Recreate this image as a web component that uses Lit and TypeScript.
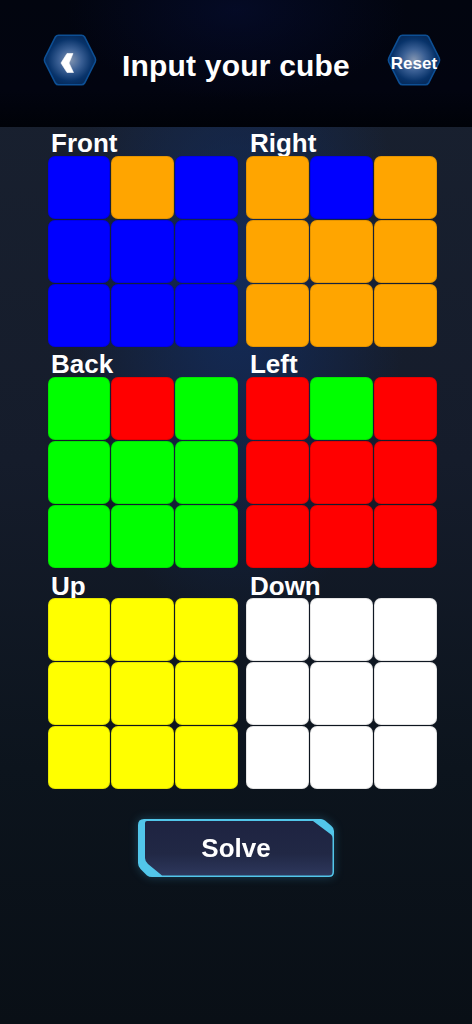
import { LitElement, html, css } from "lit";
import { customElement } from "lit/decorators.js";

const C: Record<string, string> = { b: "#0000ff", o: "#ffa500", g: "#00ff00", r: "#ff0000", y: "#ffff00", w: "#ffffff" };
const FACES: [string, string][] = [
  ["Front", "bobbbbbbb"],
  ["Right", "obooooooo"],
  ["Back", "grggggggg"],
  ["Left", "rgrrrrrrr"],
  ["Up", "yyyyyyyyy"],
  ["Down", "wwwwwwwww"],
];

const hex = (id: string) => html`
  <svg class="hexbg" viewBox="0 0 54 52" width="54" height="52" aria-hidden="true">
    <defs>
      <radialGradient id=${id} cx="50%" cy="50%" r="50%">
        <stop offset="0" stop-color="#8496b2" />
        <stop offset="0.45" stop-color="#3a5f94" />
        <stop offset="0.85" stop-color="#08336a" />
        <stop offset="1" stop-color="#062c5e" />
      </radialGradient>
    </defs>
    <path
      d="M15.5 1.2 H38.5 Q40.5 1.2 41.6 3 L52.2 24 Q53 26 52.2 28 L41.6 49 Q40.5 50.8 38.5 50.8 H15.5 Q13.5 50.8 12.4 49 L1.8 28 Q1 26 1.8 24 L12.4 3 Q13.5 1.2 15.5 1.2 Z"
      fill="url(#${id})"
      stroke="#0d4f94"
      stroke-width="1.6"
    />
  </svg>
`;

@customElement("app-root")
export class AppRoot extends LitElement {
  static styles = css`
    :host {
      display: block;
      width: 472px;
      height: 1024px;
      overflow: hidden;
      font-family: "Liberation Sans", Arial, sans-serif;
      color: #fff;
      background:
        radial-gradient(ellipse 170px 340px at 236px 290px, rgba(18, 46, 100, 0.8), rgba(18, 46, 100, 0) 100%),
        linear-gradient(180deg, #192130 0%, #151c2b 45%, #0c141d 75%, #090f16 100%);
    }
    .header {
      height: 127px;
      box-sizing: border-box;
      padding: 34px 31px 0 43px;
      display: flex;
      align-items: flex-start;
      background:
        radial-gradient(ellipse 170px 90px at 236px 10px, rgba(6, 14, 52, 0.6), rgba(6, 14, 52, 0) 100%),
        linear-gradient(180deg, #02050f 0%, #020410 70%, #000208 100%);
    }
    .hexbtn {
      display: grid;
      place-items: center;
      width: 54px;
      height: 52px;
      flex: none;
    }
    .hexbtn > * {
      grid-area: 1 / 1;
    }
    .hexbtn.end {
      margin-left: auto;
    }
    .reset {
      padding-top: 8px;
      font-size: 17px;
      font-weight: 700;
      line-height: 20px;
    }
    .chev {
      display: block;
      margin: 5px 6px 0 0;
    }
    h1 {
      margin: 0 0 0 25px;
      padding-top: 13px;
      font-size: 30px;
      line-height: 38px;
      font-weight: 700;
      letter-spacing: 0.2px;
    }
    .faces {
      display: grid;
      grid-template-columns: 190.7px 190.7px;
      column-gap: 8.3px;
      padding-left: 47.5px;
    }
    .face {
      height: 221.25px;
    }
    .label {
      display: block;
      height: 28.5px;
      padding-left: 3.5px;
      font-size: 26px;
      line-height: 33px;
      font-weight: 700;
    }
    .grid {
      display: grid;
      grid-template-columns: repeat(3, 62.9px);
      grid-auto-rows: 63px;
      gap: 1px;
    }
    .cell {
      border-radius: 7px;
      box-shadow: inset 0 0 0 1px rgba(0, 0, 0, 0.1);
    }
    .foot {
      display: flex;
      justify-content: center;
      padding-top: 28px;
    }
    .solve {
      position: relative;
      width: 196px;
      height: 58px;
      display: flex;
      align-items: center;
      justify-content: center;
      padding-top: 2px;
      box-sizing: border-box;
      font-size: 26px;
      font-weight: 700;
      filter: drop-shadow(0 0 5px rgba(62, 180, 230, 0.3));
    }
    .solve svg {
      position: absolute;
      inset: 0;
    }
    .solve span {
      position: relative;
    }
  `;

  render() {
    return html`
      <div class="header">
        <div class="hexbtn">
          ${hex("hexa")}
          <svg class="chev" viewBox="0 0 14 20" width="14" height="20" aria-hidden="true">
            <path d="M7 0.5 H13 L9 10 L13.5 19.5 H7 L1 10 Z" fill="#fff" stroke="#fff" stroke-width="0.6" stroke-linejoin="round" />
          </svg>
        </div>
        <h1>Input your cube</h1>
        <div class="hexbtn end">${hex("hexb")}<span class="reset">Reset</span></div>
      </div>
      <div class="faces">
        ${FACES.map(
          ([name, cells]) => html`
            <div class="face">
              <span class="label">${name}</span>
              <div class="grid">
                ${[...cells].map((c) => html`<div class="cell" style="background:${C[c]}"></div>`)}
              </div>
            </div>
          `
        )}
      </div>
      <div class="foot">
        <div class="solve">
          <svg viewBox="0 0 196 58" width="196" height="58" aria-hidden="true">
            <defs>
              <linearGradient id="sg" x1="0" y1="0" x2="0" y2="1">
                <stop offset="0" stop-color="#1e2341" />
                <stop offset="0.6" stop-color="#212845" />
                <stop offset="1" stop-color="#2d375c" />
              </linearGradient>
            </defs>
            <path
              d="M6 0 H183 Q185 0 187 1.5 L193.5 7 Q196 9 196 12 V53 Q196 58 191 58 H14 Q11 58 9 56.5 L2.5 50 Q0 47.5 0 44 V6 Q0 0 6 0 Z"
              fill="#52c6ea"
            />
            <path
              d="M9 2 H175 L193 15.5 Q194.5 16.5 194.5 19 V53 Q194.5 56.5 191 56.5 H24 L10 45 Q7 42.5 7 39 V4 Q7 2 9 2 Z"
              fill="url(#sg)"
            />
          </svg>
          <span>Solve</span>
        </div>
      </div>
    `;
  }
}
